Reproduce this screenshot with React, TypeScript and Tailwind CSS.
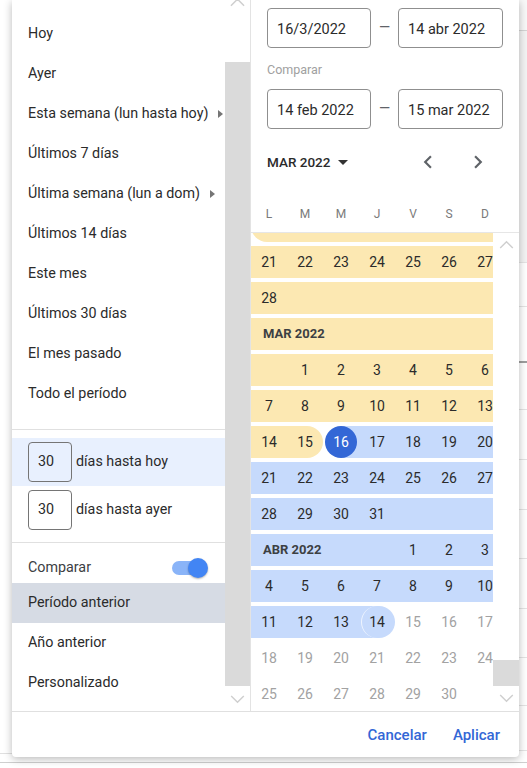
import React from 'react'

type Band = 'y' | 'b' | 'n'
type Cell = { t?: string; c: Band; r?: 'l' | 'r'; sel?: boolean; dim?: boolean; ring?: boolean }
type Row = { cells: Cell[]; label?: string; labelSpan?: number }

const yellow = 'bg-[#fce8b2]'
const blue = 'bg-[#c6dafc]'

const days = (from: number, to: number, c: Band, dim = false): Cell[] => {
    const out: Cell[] = []
    for (let i = from; i <= to; i++) out.push({ t: String(i), c, dim })
    return out
}
const blanks = (n: number, c: Band): Cell[] => Array.from({ length: n }, () => ({ c }))

// first row (14–20 feb) is scrolled up under the weekday header, only its band shows
const rows: Row[] = [
    { cells: [{ c: 'y', r: 'l' }, ...blanks(6, 'y')] },
    { cells: days(21, 27, 'y') },
    { cells: [{ t: '28', c: 'y' }, ...blanks(6, 'y')] },
    { label: 'MAR 2022', labelSpan: 7, cells: [] },
    { cells: [...blanks(1, 'y'), ...days(1, 6, 'y')] },
    { cells: days(7, 13, 'y') },
    { cells: [{ t: '14', c: 'y' }, { t: '15', c: 'y', r: 'r' }, { t: '16', c: 'b', sel: true }, ...days(17, 20, 'b')] },
    { cells: days(21, 27, 'b') },
    { cells: [...days(28, 31, 'b'), ...blanks(3, 'b')] },
    { label: 'ABR 2022', labelSpan: 4, cells: days(1, 3, 'b') },
    { cells: days(4, 10, 'b') },
    { cells: [...days(11, 13, 'b'), { t: '14', c: 'b', r: 'r', ring: true }, ...days(15, 17, 'n', true)] },
    { cells: days(18, 24, 'n', true) },
    { cells: [...days(25, 30, 'n', true), ...blanks(1, 'n')] },
]

function ChevronUp({ className = '' }: { className?: string }) {
    return (
        <svg viewBox="0 0 16 10" className={className} fill="none" stroke="#cfcfcf" strokeWidth="1.6">
            <path d="M1 9 L8 2 L15 9" />
        </svg>
    )
}

function ChevronDown({ className = '' }: { className?: string }) {
    return (
        <svg viewBox="0 0 16 10" className={className} fill="none" stroke="#cfcfcf" strokeWidth="1.6">
            <path d="M1 1 L8 8 L15 1" />
        </svg>
    )
}

function Arrow() {
    return <span className="ml-[10px] inline-block w-0 h-0 border-y-[4px] border-y-transparent border-l-[5px] border-l-[#757575]" />
}

function DayCell({ cell }: { cell: Cell }) {
    const band = cell.c === 'y' ? yellow : cell.c === 'b' ? blue : ''
    const round = cell.r === 'l' ? 'rounded-l-full' : cell.r === 'r' ? 'rounded-r-full' : ''
    if (cell.sel) {
        return (
            <div className="w-[36px] h-[32px] flex items-center justify-center bg-[linear-gradient(to_right,transparent_50%,#c6dafc_50%)]">
                <div className="w-[32px] h-[32px] rounded-full bg-[#3367d6] text-white flex items-center justify-center">
                    {cell.t}
                </div>
            </div>
        )
    }
    return (
        <div className={`relative w-[36px] h-[32px] flex items-center justify-center ${band} ${round} ${cell.dim ? 'text-[#a2a2a2]' : 'text-[#2b2b2b]'}`}>
            {cell.ring && <span className="absolute left-[2px] top-0 w-[32px] h-[32px] rounded-full border-l-[1.5px] border-white/70" />}
            {cell.t && <span className="relative">{cell.t}</span>}
        </div>
    )
}

function CalendarRow({ row }: { row: Row }) {
    const rowBand = row.label ? (row.label.startsWith('MAR') ? yellow : blue) : ''
    return (
        <div className="h-[36px] py-[2px]">
            <div className={`flex h-[32px] ${rowBand}`}>
                {row.label && (
                    <div
                        className={`h-[32px] flex items-center pl-[12px] text-[13px] font-bold text-[#3c4043] ${row.labelSpan === 7 ? 'w-[252px]' : 'w-[144px]'}`}
                    >
                        {row.label}
                    </div>
                )}
                {row.cells.map((c, i) => (
                    <DayCell key={i} cell={c} />
                ))}
            </div>
        </div>
    )
}

function DateBox({ value, wide }: { value: string; wide?: boolean }) {
    return (
        <div className={`${wide ? 'w-[105px]' : 'w-[104px]'} h-[40px] border border-[#8f8f8f] rounded-[4px] flex items-center pl-[9px] pt-[3px] text-[14.5px] text-[#2b2b2b]`}>
            {value}
        </div>
    )
}

const presets = [
    { t: 'Hoy' },
    { t: 'Ayer' },
    { t: 'Esta semana (lun hasta hoy)', arrow: true },
    { t: 'Últimos 7 días' },
    { t: 'Última semana (lun a dom)', arrow: true },
    { t: 'Últimos 14 días' },
    { t: 'Este mes' },
    { t: 'Últimos 30 días' },
    { t: 'El mes pasado' },
    { t: 'Todo el período' },
]

export default function App() {
    return (
        <div className="relative w-[527px] h-[768px] overflow-hidden bg-white font-['Roboto',sans-serif] text-[14.3px]">
            {/* Page behind the popup */}
            <div className="absolute inset-0">
                <div className="absolute left-[505px] right-0 top-0 h-[30px] bg-[#f8f8f8]" />
                <div className="absolute left-[505px] right-0 top-[30px] h-[232px] bg-[#f3f3f3] border-t border-[#d4d4d4]" />
                {[262, 306, 409, 459, 509, 558, 608, 657, 705, 750].map(y => (
                    <div key={y} className="absolute left-[505px] right-0 h-px bg-[#e4e4e4]" style={{ top: y }} />
                ))}
                <div className="absolute left-[505px] right-0 top-[361px] h-[2px] bg-[#9e9e9e]" />
                <div className="absolute left-0 w-[12px] top-[753px] h-px bg-[#e0e0e0]" />
                <div className="absolute left-0 right-0 top-[762px] h-px bg-[#cfcfcf]" />
            </div>

            {/* Date range popup */}
            <div className="absolute left-[12px] top-0 w-[507px] h-[757px] bg-white rounded-b-[4px] shadow-[0_2px_8px_rgba(0,0,0,0.28)] flex flex-col">
                <div className="flex h-[711px]">
                    {/* Presets */}
                    <div className="flex w-[239px] border-r border-[#e3e3e3]">
                        <div className="w-[213px] text-[#2b2b2b]">
                            <div className="pt-[14px] pb-[15px] border-b border-[#e0e0e0]">
                                {presets.map(p => (
                                    <div key={p.t} className="h-[40px] flex items-center pl-[16px]">
                                        {p.t}
                                        {p.arrow && <Arrow />}
                                    </div>
                                ))}
                            </div>
                            <div className="pt-[8px] pb-[8px] border-b border-[#e0e0e0]">
                                <div className="h-[48px] flex items-center pl-[16px] bg-[#e8f0fe]">
                                    <div className="w-[44px] h-[40px] border border-[#757575] rounded-[4px] flex items-center pl-[9px]">30</div>
                                    <span className="ml-[4px]">días hasta hoy</span>
                                </div>
                                <div className="h-[48px] flex items-center pl-[16px]">
                                    <div className="w-[44px] h-[40px] border border-[#757575] rounded-[4px] flex items-center pl-[9px]">30</div>
                                    <span className="ml-[4px]">días hasta ayer</span>
                                </div>
                            </div>
                            <div className="h-[40px] pt-[9px] flex items-center justify-between pl-[16px] pr-[17px]">
                                <span className="text-[#3c4043]">Comparar</span>
                                <div className="relative w-[36px] h-[20px] flex items-center">
                                    <div className="w-[32px] h-[14px] rounded-full bg-[#8ab4f8]" />
                                    <div className="absolute right-0 top-0 w-[20px] h-[20px] rounded-full bg-[#4285f4] shadow-[0_1px_2px_rgba(0,0,0,0.3)]" />
                                </div>
                            </div>
                            <div className="h-[40px] flex items-center pl-[16px] bg-[#d6dbe4]">Período anterior</div>
                            <div className="h-[40px] flex items-center pl-[16px]">Año anterior</div>
                            <div className="h-[40px] flex items-center pl-[16px]">Personalizado</div>
                        </div>
                        <div className="w-[25px] flex flex-col items-center">
                            <div className="h-[62px] w-full flex justify-center">
                                <ChevronUp className="w-[15px] h-[10px] -mt-[3px]" />
                            </div>
                            <div className="w-full h-[624px] bg-[#dadada]" />
                            <div className="flex-1 w-full flex items-center justify-center">
                                <ChevronDown className="w-[15px] h-[9px] mt-[1px]" />
                            </div>
                        </div>
                    </div>

                    {/* Calendar */}
                    <div className="w-[268px] flex flex-col">
                        <div className="h-[233px] border-b border-[#e6e6e6] px-[16px] pt-[8px]">
                            <div className="flex items-center">
                                <DateBox value="16/3/2022" />
                                <span className="w-[27px] text-center text-[#5f6368]">—</span>
                                <DateBox value="14 abr 2022" wide />
                            </div>
                            <div className="mt-[14px] h-[16px] text-[12.5px] leading-[16px] text-[#a0a0a0]">Comparar</div>
                            <div className="mt-[11px] flex items-center">
                                <DateBox value="14 feb 2022" />
                                <span className="w-[27px] text-center text-[#5f6368]">—</span>
                                <DateBox value="15 mar 2022" wide />
                            </div>
                            <div className="mt-[13px] h-[40px] flex items-center">
                                <span className="text-[13.5px] font-medium text-[#2b2b2b]">MAR 2022</span>
                                <span className="ml-[8px] w-0 h-0 border-x-[5px] border-x-transparent border-t-[5px] border-t-[#333]" />
                                <div className="ml-auto flex items-center gap-[24px] mr-[12px]">
                                    <svg viewBox="0 0 24 24" className="w-[26px] h-[26px]" fill="#5f6368">
                                        <path d="M15.41 7.41L14 6l-6 6 6 6 1.41-1.41L10.83 12z" />
                                    </svg>
                                    <svg viewBox="0 0 24 24" className="w-[26px] h-[26px]" fill="#5f6368">
                                        <path d="M10 6L8.59 7.41 13.17 12l-4.58 4.59L10 18l6-6z" />
                                    </svg>
                                </div>
                            </div>
                            <div className="-mx-[16px] mt-[20px] h-[24px] flex text-[12px] leading-[16px] text-[#7a7a7a]">
                                {['L', 'M', 'M', 'J', 'V', 'S', 'D'].map((d, i) => (
                                    <div key={i} className="w-[36px] flex items-center justify-center">{d}</div>
                                ))}
                            </div>
                        </div>
                        <div className="flex flex-1 min-h-0">
                            <div className="w-[242px] overflow-hidden">
                                <div className="w-[252px] -mt-[25px] text-[14px]">
                                    {rows.map((r, i) => (
                                        <CalendarRow key={i} row={r} />
                                    ))}
                                </div>
                            </div>
                            <div className="w-[26px] flex flex-col items-center">
                                <div className="h-[28px] w-full flex items-center justify-center">
                                    <ChevronUp className="w-[15px] h-[9px] -mt-[5px]" />
                                </div>
                                <div className="h-[399px]" />
                                <div className="w-full h-[26px] bg-[#dadada]" />
                                <div className="flex-1 w-full flex items-center justify-center">
                                    <ChevronDown className="w-[15px] h-[9px]" />
                                </div>
                            </div>
                        </div>
                    </div>
                </div>

                {/* Footer */}
                <div className="h-[46px] border-t border-[#e0e0e0] flex items-center justify-end pt-[2px] pr-[11px] gap-[10px]">
                    <button className="px-[8px] h-[36px] text-[15px] font-medium text-[#3367d6]">Cancelar</button>
                    <button className="px-[8px] h-[36px] text-[15px] font-medium text-[#3367d6]">Aplicar</button>
                </div>
            </div>
        </div>
    )
}
